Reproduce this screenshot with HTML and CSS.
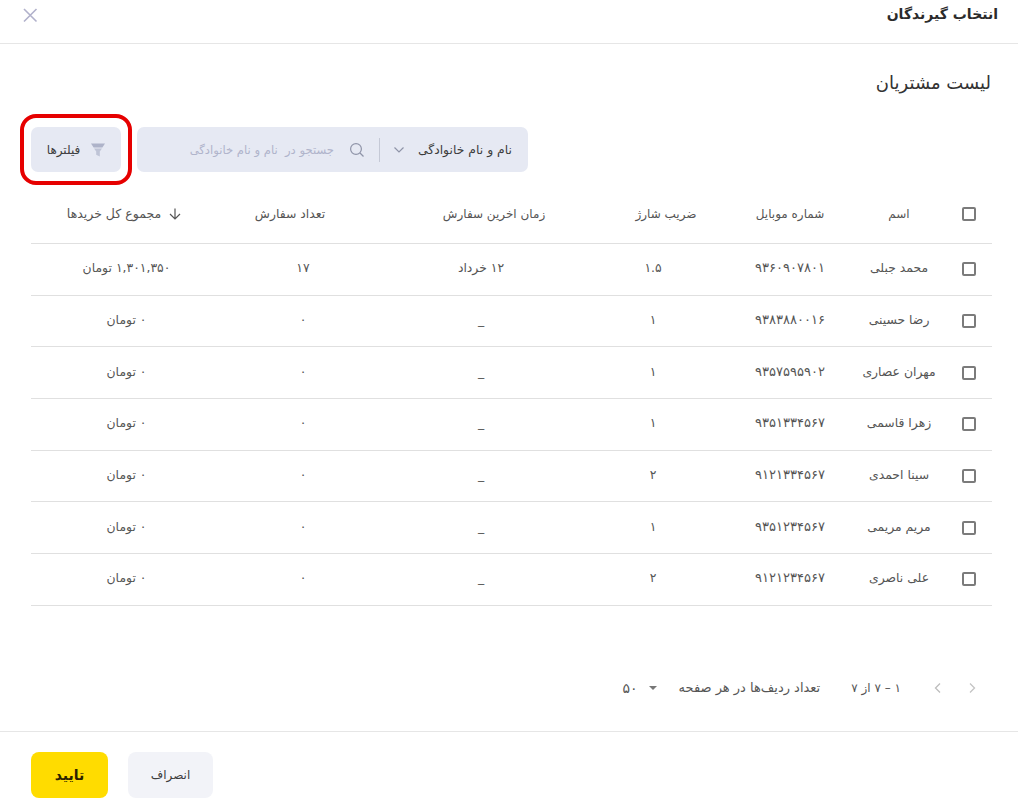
FILE: index.html
```html
<!DOCTYPE html>
<html lang="fa" dir="rtl">
<head>
<meta charset="utf-8">
<title>انتخاب گیرندگان</title>
<link rel="stylesheet" href="styles.css">
</head>
<body>
<div class="dialog">
  <header class="top">
    <h1 class="title">انتخاب گیرندگان</h1>
    <button class="close" aria-label="بستن">
      <svg width="16" height="16" viewBox="0 0 16 16"><path d="M2 2 14.5 14.5M14.5 2 2 14.5" stroke="#b1b1cb" stroke-width="1.6" fill="none"/></svg>
    </button>
  </header>
  <main class="content">
    <h2 class="list-title">لیست مشتریان</h2>
    <div class="toolbar">
      <div class="search">
        <span class="field-select">نام و نام خانوادگی</span>
        <svg class="chev" width="12" height="8" viewBox="0 0 12 8"><path d="M1.5 1.5 6 6 10.5 1.5" stroke="#8f94a8" stroke-width="1.2" fill="none"/></svg>
        <span class="sep"></span>
        <svg class="mag" width="16" height="16" viewBox="0 0 16 16"><circle cx="7" cy="7" r="5.4" stroke="#8f94a8" stroke-width="1.2" fill="none"/><path d="M11 11 14.5 14.5" stroke="#8f94a8" stroke-width="1.2"/></svg>
        <span class="placeholder">جستجو در  نام و نام خانوادگی</span>
      </div>
      <div class="filter-wrap">
        <button class="filter">
          <svg width="14" height="14" viewBox="0 0 14 14"><path d="M0 0.5H14L11.4 4.5H2.6Z" fill="#aeb3c9"/><path d="M3 5.5H11L8.8 8.6V13.5L5.2 11.8V8.6Z" fill="#bfc4d6"/></svg>
          <span>فیلترها</span>
        </button>
        <span class="highlight"></span>
      </div>
    </div>
    <div class="table">
      <div class="row head">
        <div class="cell"><span class="check"></span></div>
        <div class="cell">اسم</div>
        <div class="cell">شماره موبایل</div>
        <div class="cell shift-right">ضریب شارژ</div>
        <div class="cell shift-right">زمان اخرین سفارش</div>
        <div class="cell shift-left">تعداد سفارش</div>
        <div class="cell sorted">
          <svg width="12" height="12" viewBox="0 0 12 12"><path d="M6 0.5V11M1 6 6 11 11 6" stroke="#555" stroke-width="1.2" fill="none"/></svg>
          <span>مجموع کل خریدها</span>
        </div>
      </div>
      <div class="row">
        <div class="cell"><span class="check"></span></div><div class="cell">محمد جبلی</div><div class="cell num">۹۳۶۰۹۰۷۸۰۱</div><div class="cell">۱.۵</div><div class="cell">۱۲ خرداد</div><div class="cell">۱۷</div><div class="cell">۱,۳۰۱,۳۵۰ تومان</div>
      </div>
      <div class="row">
        <div class="cell"><span class="check"></span></div><div class="cell">رضا حسینی</div><div class="cell num">۹۳۸۳۸۸۰۰۱۶</div><div class="cell">۱</div><div class="cell">_</div><div class="cell">۰</div><div class="cell">۰ تومان</div>
      </div>
      <div class="row">
        <div class="cell"><span class="check"></span></div><div class="cell">مهران عصاری</div><div class="cell num">۹۳۵۷۵۹۵۹۰۲</div><div class="cell">۱</div><div class="cell">_</div><div class="cell">۰</div><div class="cell">۰ تومان</div>
      </div>
      <div class="row">
        <div class="cell"><span class="check"></span></div><div class="cell">زهرا قاسمی</div><div class="cell num">۹۳۵۱۳۳۴۵۶۷</div><div class="cell">۱</div><div class="cell">_</div><div class="cell">۰</div><div class="cell">۰ تومان</div>
      </div>
      <div class="row">
        <div class="cell"><span class="check"></span></div><div class="cell">سینا احمدی</div><div class="cell num">۹۱۲۱۳۳۴۵۶۷</div><div class="cell">۲</div><div class="cell">_</div><div class="cell">۰</div><div class="cell">۰ تومان</div>
      </div>
      <div class="row">
        <div class="cell"><span class="check"></span></div><div class="cell">مریم مریمی</div><div class="cell num">۹۳۵۱۲۳۴۵۶۷</div><div class="cell">۱</div><div class="cell">_</div><div class="cell">۰</div><div class="cell">۰ تومان</div>
      </div>
      <div class="row">
        <div class="cell"><span class="check"></span></div><div class="cell">علی ناصری</div><div class="cell num">۹۱۲۱۲۳۴۵۶۷</div><div class="cell">۲</div><div class="cell">_</div><div class="cell">۰</div><div class="cell">۰ تومان</div>
      </div>
    </div>
    <div class="pager">
      <svg class="pg-icon" width="10" height="12" viewBox="0 0 10 12"><path d="M3 1.5 7.5 6 3 10.5" stroke="#c4c4c4" stroke-width="1.3" fill="none"/></svg>
      <svg class="pg-icon" width="10" height="12" viewBox="0 0 10 12"><path d="M7 1.5 2.5 6 7 10.5" stroke="#bdbdbd" stroke-width="1.3" fill="none"/></svg>
      <span class="pg-range">۱ – ۷ از ۷</span>
      <span class="pg-label">تعداد ردیف‌ها در هر صفحه</span>
      <svg class="pg-caret" width="8" height="4" viewBox="0 0 8 4"><path d="M0 0H8L4 4Z" fill="#777"/></svg>
      <span class="pg-size">۵۰</span>
    </div>
  </main>
  <footer class="foot">
    <button class="btn cancel">انصراف</button>
    <button class="btn ok">تایید</button>
  </footer>
</div>
</body>
</html>
```
FILE: styles.css
```css
* { box-sizing: border-box; }
html, body { margin: 0; height: 807px; overflow: hidden; background: #fff; }
body, button { font-family: "DejaVu Sans", "Noto Sans", sans-serif; }
.dialog { width: 1018px; height: 807px; display: flex; flex-direction: column; color: #444; font-size: 12px; }
.top { height: 44px; border-bottom: 1px solid #e6e6e6; display: flex; justify-content: space-between; align-items: flex-start; padding: 5px 20px 0 22px; }
.title { margin: 0; font-size: 14px; line-height: 18px; font-weight: 700; color: #2b2b2b; }
.close { border: 0; background: none; padding: 0; margin-top: 2px; width: 16px; height: 16px; }
.content { flex: 1; padding: 0 26px; display: flex; flex-direction: column; }
.list-title { margin: 26px 1px 0 0; font-size: 18px; line-height: 26px; font-weight: 400; color: #333; }
.toolbar { display: flex; gap: 16px; margin: 31px 0 0; height: 45px; padding-right: 464px; }
.search { width: 391px; height: 45px; background: #e6e9f3; border-radius: 7px; display: flex; align-items: center; padding: 0 16px; flex: none; }
.field-select { color: #3d3d3d; white-space: nowrap; font-size: 12.4px; }
.chev { margin-right: 13px; flex: none; }
.sep { width: 1px; height: 24px; background: #c5c9d6; margin: 0 13px 0 14px; flex: none; }
.mag { flex: none; }
.placeholder { margin-right: 15px; color: #b0b4cb; white-space: pre; font-size: 11.6px; }
.filter-wrap { position: relative; flex: none; width: 90px; height: 45px; }
.filter { width: 100%; height: 100%; border: 0; border-radius: 7px; background: #e6e9f3; color: #3d3d3d; font-size: 12px; display: flex; align-items: center; justify-content: center; gap: 11px; padding: 0; }
.highlight { position: absolute; inset: -13px -11px -13px -11px; border: 4px solid #e60000; border-radius: 16px; pointer-events: none; }
.table { margin: 18px 0 0; padding: 0 0 0 5px; }
.row { display: grid; grid-template-columns: 46px 94px 124px 150px 194px 162px 1fr; height: 51.7px; border-bottom: 1px solid #e0e0e0; align-items: center; text-align: center; color: #555; font-size: 12.4px; }
.row.head { height: 54px; padding-bottom: 6px; font-size: 12px; }
.cell { display: flex; justify-content: center; align-items: center; gap: 8px; white-space: nowrap; padding-bottom: 3px; }
.cell:first-child, .head .cell { padding-bottom: 0; }
.num { font-size: 13px; }
.shift-right { padding-left: 26px; }
.shift-left { padding-right: 26px; font-size: 12.4px; }
.sorted { padding-right: 5px; font-size: 12.5px; }
.check { width: 14px; height: 14px; border: 2px solid #7b7b7b; border-radius: 2px; display: block; }
.pager { display: flex; align-items: center; height: 20px; margin-top: 72px; padding-right: 15px; color: #555; }
.pg-icon { flex: none; margin-left: 24px; }
.pg-icon + .pg-icon { margin-left: 32px; }
.pg-range { margin-left: 31px; font-size: 12px; }
.pg-label { margin-left: 22px; white-space: nowrap; font-size: 13px; }
.pg-caret { margin-left: 11px; flex: none; }
.pg-size { font-size: 14px; }
.foot { height: 76px; border-top: 1px solid #e6e6e6; display: flex; justify-content: flex-end; align-items: flex-start; gap: 20px; padding: 20px 31px 0; }
.btn { border: 0; height: 46px; border-radius: 8px; padding: 0; }
.cancel { width: 85px; background: #f2f3f8; color: #3d3d3d; font-size: 12px; }
.ok { width: 77px; background: #ffdc00; color: #2b2100; font-size: 14px; font-weight: 700; }
```
